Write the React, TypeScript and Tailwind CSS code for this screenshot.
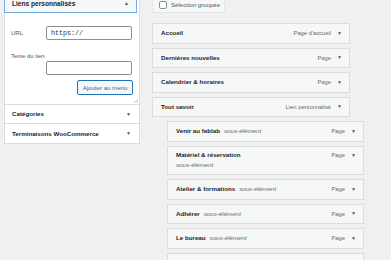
const font = { fontFamily: '"Liberation Sans", Arial, sans-serif' }

type Item = { title: string; type: string; sub?: boolean; wrap?: boolean }

const items: Item[] = [
  { title: 'Accueil', type: "Page d'accueil" },
  { title: 'Dernières nouvelles', type: 'Page' },
  { title: 'Calendrier & horaires', type: 'Page' },
  { title: 'Tout savoir', type: 'Lien personnalisé' },
  { title: 'Venir au fablab', type: 'Page', sub: true },
  { title: 'Matériel & réservation', type: 'Page', sub: true, wrap: true },
  { title: 'Atelier & formations', type: 'Page', sub: true },
  { title: 'Adhérer', type: 'Page', sub: true },
  { title: 'Le bureau', type: 'Page', sub: true },
  { title: '', type: '', sub: true },
]

function Arrow({ up = false }: { up?: boolean }) {
  return <span className="text-[#50575e] text-[5px] leading-none">{up ? '▲' : '▼'}</span>
}

function MenuItem({ item }: { item: Item }) {
  return (
    <div
      className={`shrink-0 border border-[#dcdcde] bg-[#f6f7f7] flex justify-between pl-[8px] pr-[7px] ${
        item.sub ? 'ml-[15px] w-[197px]' : 'w-[198px]'
      } ${item.wrap ? 'h-[29.5px] items-start pt-[4.5px]' : 'h-[20.5px] items-center'}`}
    >
      <div className={`flex ${item.wrap ? 'flex-col gap-[2px]' : 'items-center gap-[4px]'}`}>
        <span className="text-[6.2px] font-bold text-[#1d2327] leading-[8px]">{item.title}</span>
        {item.sub && item.title && (
          <span className="text-[6.2px] italic text-[#646970] leading-[8px]">sous-élément</span>
        )}
      </div>
      {item.type && (
        <div className="flex items-center gap-[6px] h-[8px]">
          <span className="text-[5.8px] text-[#646970] leading-[8px]">{item.type}</span>
          <Arrow />
        </div>
      )}
    </div>
  )
}

export default function App() {
  return (
    <div className="w-[391px] h-[260px] overflow-hidden bg-[#f0f0f1] flex items-start" style={font}>
      <div className="w-[148px] pl-[4px] mt-[-6px] shrink-0">
        <div className="w-[136px] border border-[#dcdcde] bg-white">
          <div className="h-[19px] border border-[#72aee6] bg-[#f6f7f7] flex items-center justify-between pl-[7px] pr-[7px] -m-px mr-[2px]">
            <span className="text-[6.6px] font-bold text-[#1d2327]">Liens personnalisés</span>
            <Arrow up />
          </div>
          <div className="pl-[6px] pr-[7px] pt-[14px] pb-[9px] border-b border-[#dcdcde] relative">
            <div className="flex items-center justify-between">
              <span className="text-[6px] text-[#50575e]">URL</span>
              <div className="w-[86px] h-[14px] border border-[#8c8f94] rounded-[2px] bg-white flex items-center pl-[4px]">
                <span className="text-[6.7px] text-[#2c3338]" style={{ fontFamily: '"Liberation Mono", monospace' }}>
                  https://
                </span>
              </div>
            </div>
            <div className="mt-[12px] text-[6px] text-[#50575e] leading-[8px]">Texte du lien</div>
            <div className="flex justify-end mt-[1px]">
              <div className="w-[86px] h-[14px] border border-[#8c8f94] rounded-[2px] bg-white" />
            </div>
            <div className="flex justify-end mt-[5px] -mr-[1px]">
              <div className="w-[56px] h-[15px] border border-[#2271b1] rounded-[2px] bg-[#f6f7f7] flex items-center justify-center text-[6.1px] text-[#2271b1]">
                Ajouter au menu
              </div>
            </div>
            <svg className="absolute right-[1px] bottom-[1px]" width="5" height="5" viewBox="0 0 5 5">
              <path d="M1 5 L5 1 M3 5 L5 3" stroke="#a7aaad" strokeWidth="0.7" />
            </svg>
          </div>
          <div className="h-[19px] border-b border-[#dcdcde] flex items-center justify-between pl-[7px] pr-[8px]">
            <span className="text-[6.2px] font-bold text-[#1d2327]">Catégories</span>
            <Arrow />
          </div>
          <div className="h-[19px] flex items-center justify-between pl-[7px] pr-[8px]">
            <span className="text-[6.2px] font-bold text-[#1d2327]">Terminaisons WooCommerce</span>
            <Arrow />
          </div>
        </div>
      </div>
      <div className="flex flex-col pl-[4px] mt-[-4px] shrink-0">
        <div className="shrink-0 w-[73px] h-[17px] border border-[#e5e5e5] bg-[#f6f7f7] rounded-[2px] flex items-center gap-[4px] pl-[6px]">
          <span className="w-[8px] h-[8px] border border-[#8c8f94] rounded-[2px] bg-white" />
          <span className="text-[6.1px] text-[#50575e]">Sélection groupée</span>
        </div>
        <div className="flex flex-col gap-[4px] mt-[10px]">
          {items.map((item, i) => (
            <MenuItem key={i} item={item} />
          ))}
        </div>
      </div>
    </div>
  )
}
